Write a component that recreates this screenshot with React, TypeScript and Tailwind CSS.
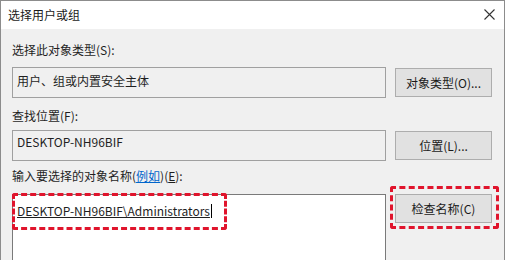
import React from "react";

const font = { fontFamily: '"Noto Sans CJK SC", "Noto Sans", sans-serif' };

function Btn({ children }: { children: React.ReactNode }) {
  return (
    <div className="flex h-[29px] w-[97px] items-center justify-center border border-[#adadad] bg-[#e1e1e1] text-[12px] text-[#1a1a1a]">
      {children}
    </div>
  );
}

export default function App() {
  return (
    <div
      className="flex h-[260px] w-[505px] flex-col overflow-hidden border-x border-t border-[#8c8c8c] bg-[#f0f0f0] text-[12px] leading-none text-[#1f1f1f]"
      style={font}
    >
      <div className="flex h-[28px] shrink-0 items-center justify-between bg-white pl-[7px] pr-[9px]">
        <span className="text-[12px] text-[#1a1a1a]">选择用户或组</span>
        <svg width="11" height="11" viewBox="0 0 11 11" className="mb-[1px]">
          <path d="M0.5 0.5 L10.5 10.5 M10.5 0.5 L0.5 10.5" stroke="#333" strokeWidth="1.1" fill="none" />
        </svg>
      </div>

      <div className="flex flex-col pl-[11px] pr-[12px]">
        <div className="mt-[15px] h-[14px]">选择此对象类型(S):</div>
        <div className="mt-[9px] flex items-start gap-[9px]">
          <div className="h-[31px] w-[375px] border border-[#a0a0a0] bg-[#f0f0f0] pl-[4px] pt-[7px]">
            用户、组或内置安全主体
          </div>
          <div className="pt-[1px]">
            <Btn>对象类型(O)...</Btn>
          </div>
        </div>

        <div className="mt-[12px] h-[14px]">查找位置(F):</div>
        <div className="mt-[6px] flex items-start gap-[9px]">
          <div className="h-[31px] w-[375px] border border-[#a0a0a0] bg-[#f0f0f0] pl-[4px] pt-[5px]">
            DESKTOP-NH96BIF
          </div>
          <div className="pt-[1px]">
            <Btn>位置(L)...</Btn>
          </div>
        </div>

        <div className="mt-[9px] h-[14px]">
          输入要选择的对象名称(<span className="text-[#0066cc] underline">例如</span>)(<span className="underline">E</span>):
        </div>
        <div className="mt-[10px] flex items-start gap-[9px]">
          <div className="relative h-[80px] w-[375px] border border-[#7a7a7a] border-b-0 bg-white pl-[4px] pt-[7px]">
            <span className="underline">DESKTOP-NH96BIF\Administrators</span>
            <span className="ml-[1px] inline-block h-[14px] w-[1px] translate-y-[2px] bg-black" />
            <div className="pointer-events-none absolute left-[-1px] top-[-2px] h-[37px] w-[215px] rounded-[3px] border-[3px] border-dashed border-[#e0142c]" />
          </div>
          <div className="relative">
            <Btn>检查名称(C)</Btn>
            <div className="pointer-events-none absolute left-[-5px] top-[-8px] h-[43px] w-[109px] rounded-[3px] border-[3px] border-dashed border-[#e0142c]" />
          </div>
        </div>
      </div>
    </div>
  );
}
